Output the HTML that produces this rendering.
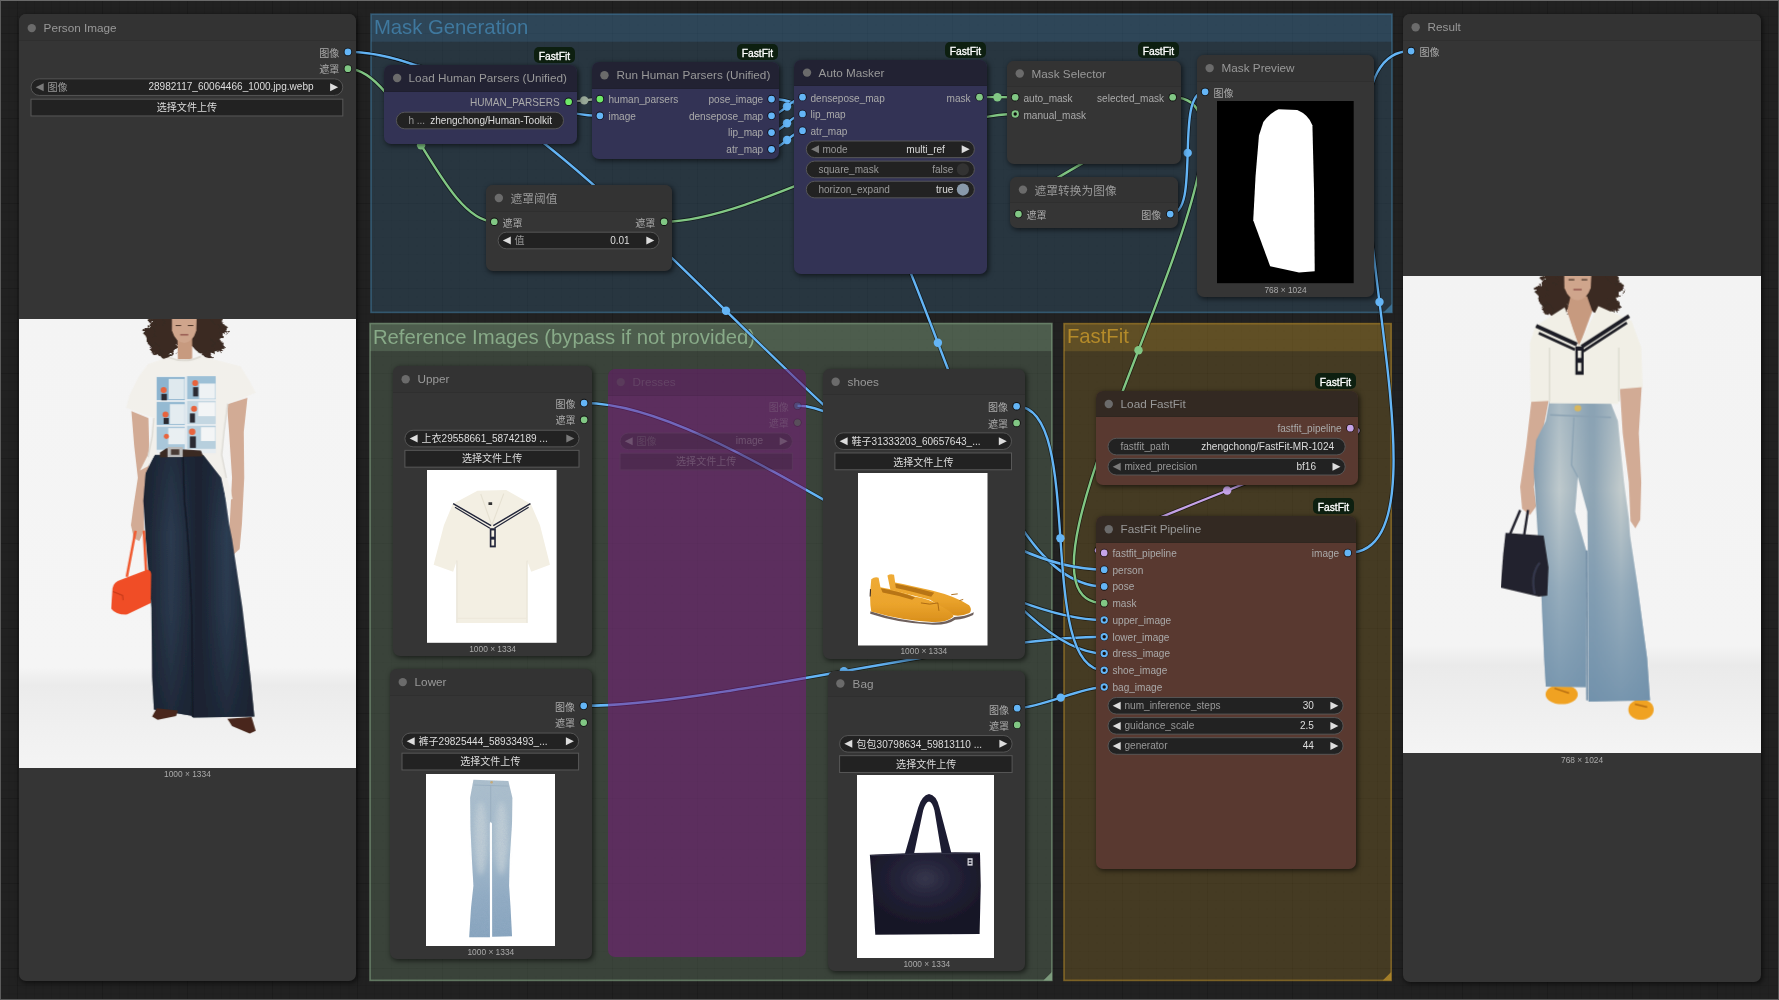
<!DOCTYPE html><html lang="zh"><head><meta charset="utf-8"><title>FastFit workflow</title><style>
*{box-sizing:border-box;margin:0;padding:0}
html,body{width:1779px;height:1000px;overflow:hidden;background:#1f1f1f}
body{font-family:"Liberation Sans","Noto Sans CJK SC",sans-serif;position:relative;
 background-color:#212121;
 background-image:
  linear-gradient(to right,rgba(0,0,0,.10) 1px,transparent 1px),
  linear-gradient(to bottom,rgba(0,0,0,.10) 1px,transparent 1px),
  linear-gradient(to right,rgba(0,0,0,.065) 1px,transparent 1px),
  linear-gradient(to bottom,rgba(0,0,0,.065) 1px,transparent 1px);
 background-size:85px 85px,85px 85px,8.5px 8.5px,8.5px 8.5px;
 background-position:17px 0,0 33px,0 0,0 7.5px;
}
.frame{position:absolute;left:0;top:0;width:1779px;height:1000px;border-top:1px solid #6a6a6a;border-left:1px solid #5c5c5c;border-bottom:1.5px solid #5a5a5a;border-right:1px solid #565656;pointer-events:none;z-index:50}
.grp{position:absolute;border:1px solid;}
.grp .gt{position:absolute;left:0;top:0;right:0;height:28.4px}
.grp .gl{position:absolute;left:2.8px;top:2.6px;font-size:20.1px;line-height:24px;white-space:nowrap}
.grp .tri{position:absolute;right:0;bottom:0;width:0;height:0;border-style:solid;border-width:0 0 9px 9px;border-color:transparent}
.node{position:absolute;border-radius:7px;box-shadow:1.5px 1.5px 5px rgba(0,0,0,.55);}
.node .tb{position:absolute;left:0;top:0;right:0;height:26.5px;border-radius:7px 7px 0 0;border-bottom:1.5px solid rgba(0,0,0,.065)}
.node .td{position:absolute;left:8.4px;top:8.6px;width:8.4px;height:8.4px;border-radius:50%;background:#6b6b6b}
.tt{position:absolute;left:24.6px;top:0;height:25px;line-height:25.6px;font-size:11.73px;color:#999;white-space:nowrap}
.sl{position:absolute;font-size:10.05px;line-height:12px;color:#aaa;white-space:nowrap}
.dot{position:absolute;width:8.8px;height:8.8px;border-radius:50%;border:1px solid rgba(0,0,0,.75);background-clip:border-box}
.ring{position:absolute;width:7.8px;height:7.8px;border-radius:50%;border:2.2px solid;background:transparent;box-shadow:0 0 0 1px rgba(0,0,0,.7)}
.w{position:absolute;height:17.3px;border-radius:8.7px;background:#222;border:1px solid #5c5c5c;font-size:10.05px;line-height:17.2px;color:#ddd;white-space:nowrap;overflow:hidden}
.w .l{position:absolute;left:12.5px;top:0;color:#999}
.w .v{position:absolute;right:12.5px;top:0;color:#ddd}
.w .al,.w .ar{position:absolute;top:3.2px;width:0;height:0;border-style:solid;border-color:transparent}
.w .al{left:4.3px;border-width:4.3px 8.5px 4.3px 0;border-right-color:#ddd}
.w .ar{right:4.3px;border-width:4.3px 0 4.3px 8.5px;border-left-color:#ddd}
.w .al.dim{border-right-color:#7a7a7a}
.w .ar.dim{border-left-color:#7a7a7a}
.w .tg{position:absolute;right:5.6px;top:1.4px;width:12.2px;height:12.2px;border-radius:50%}
.btn{position:absolute;height:17.5px;background:#222;border:1px solid #595959;font-size:10.05px;line-height:15.5px;color:#ddd;text-align:center;white-space:nowrap}
.il{position:absolute;font-size:8.4px;line-height:10px;color:#aaa;text-align:center;white-space:nowrap}
.bdg{will-change:transform;position:absolute;height:16.4px;border-radius:5px;background:#0d1f10;color:#fff;font-size:10.3px;line-height:20.2px;-webkit-text-stroke:.3px #fff;text-align:center;white-space:nowrap}
.pic{position:absolute;overflow:hidden}
.pic svg{display:block;width:100%;height:100%}
svg.links{will-change:transform;position:absolute;left:0;top:0;width:1779px;height:1000px;overflow:visible}
.byp{opacity:.22}
.nt{position:absolute;z-index:12;will-change:transform}
.wt{position:absolute;height:17.4px;line-height:18.3px;font-size:10.05px;white-space:nowrap}
</style></head><body>
<svg class="links" style="z-index:1" viewBox="0 0 1779 1000"><rect x="371.0" y="14.15" width="1021.0" height="298.25" fill="rgba(63,120,158,0.25)"/><rect x="371.0" y="14.15" width="1021.0" height="27.6" fill="rgba(63,120,158,0.25)"/><rect x="371.0" y="14.15" width="1021.0" height="298.25" fill="none" stroke="rgba(63,120,158,.58)" stroke-width="1.6"/><path d="M1392.0 303.9L1392.0 312.4L1383.5 312.4Z" fill="rgba(63,120,158,.85)"/><text x="373.9" y="33.95" font-size="20.3" fill="#3f789e">Mask Generation</text><rect x="370.0" y="323.5" width="681.9" height="656.9" fill="rgba(136,170,136,0.25)"/><rect x="370.0" y="323.5" width="681.9" height="27.6" fill="rgba(136,170,136,0.25)"/><rect x="370.0" y="323.5" width="681.9" height="656.9" fill="none" stroke="rgba(136,170,136,.58)" stroke-width="1.6"/><path d="M1051.9 971.9L1051.9 980.4L1043.4 980.4Z" fill="rgba(136,170,136,.85)"/><text x="372.9" y="344.0" font-size="20.3" fill="#88AA88">Reference Images (bypass if not provided)</text><rect x="1064.0" y="323.6" width="327.2" height="656.8" fill="rgba(181,139,42,0.25)"/><rect x="1064.0" y="323.6" width="327.2" height="27.6" fill="rgba(181,139,42,0.25)"/><rect x="1064.0" y="323.6" width="327.2" height="656.8" fill="none" stroke="rgba(181,139,42,.58)" stroke-width="1.6"/><path d="M1391.2 971.9L1391.2 980.4L1382.7 980.4Z" fill="rgba(181,139,42,.85)"/><text x="1066.9" y="343.40000000000003" font-size="20.3" fill="#b58b2a">FastFit</text></svg>
<svg class="links" style="z-index:5" viewBox="0 0 1779 1000"><path d="M347.9 51.9C412.9 51.9 534.9 115.8 599.9 115.8" stroke="rgba(0,0,0,.55)" stroke-width="3.9" fill="none"/><path d="M347.9 51.9C412.9 51.9 534.9 115.8 599.9 115.8" stroke="#64B5F6" stroke-width="2.4" fill="none"/><circle cx="473.9" cy="83.9" r="4.2" fill="#64B5F6"/><path d="M347.9 68.7C400.8 68.7 441.4 221.7 494.3 221.7" stroke="rgba(0,0,0,.55)" stroke-width="3.9" fill="none"/><path d="M347.9 68.7C400.8 68.7 441.4 221.7 494.3 221.7" stroke="#81C784" stroke-width="2.4" fill="none"/><circle cx="421.1" cy="145.2" r="4.2" fill="#81C784"/><path d="M568.6 101.7C576.5 101.7 592.0 99.0 599.9 99.0" stroke="rgba(0,0,0,.55)" stroke-width="3.9" fill="none"/><path d="M568.6 101.7C576.5 101.7 592.0 99.0 599.9 99.0" stroke="#99AA99" stroke-width="2.4" fill="none"/><circle cx="584.2" cy="100.4" r="4.2" fill="#99AA99"/><path d="M771.5 99.0C919.0 99.0 956.7 586.5 1104.2 586.5" stroke="rgba(0,0,0,.55)" stroke-width="3.9" fill="none"/><path d="M771.5 99.0C919.0 99.0 956.7 586.5 1104.2 586.5" stroke="#64B5F6" stroke-width="2.4" fill="none"/><circle cx="937.9" cy="342.7" r="4.2" fill="#64B5F6"/><path d="M771.5 115.8C780.5 115.8 793.5 97.1 802.5 97.1" stroke="rgba(0,0,0,.55)" stroke-width="3.9" fill="none"/><path d="M771.5 115.8C780.5 115.8 793.5 97.1 802.5 97.1" stroke="#64B5F6" stroke-width="2.4" fill="none"/><circle cx="787.0" cy="106.5" r="4.2" fill="#64B5F6"/><path d="M771.5 132.6C780.5 132.6 793.5 113.9 802.5 113.9" stroke="rgba(0,0,0,.55)" stroke-width="3.9" fill="none"/><path d="M771.5 132.6C780.5 132.6 793.5 113.9 802.5 113.9" stroke="#64B5F6" stroke-width="2.4" fill="none"/><circle cx="787.0" cy="123.2" r="4.2" fill="#64B5F6"/><path d="M771.5 149.3C780.5 149.3 793.5 130.7 802.5 130.7" stroke="rgba(0,0,0,.55)" stroke-width="3.9" fill="none"/><path d="M771.5 149.3C780.5 149.3 793.5 130.7 802.5 130.7" stroke="#64B5F6" stroke-width="2.4" fill="none"/><circle cx="787.0" cy="140.0" r="4.2" fill="#64B5F6"/><path d="M979.5 97.1C988.4 97.1 1006.3 97.2 1015.2 97.2" stroke="rgba(0,0,0,.55)" stroke-width="3.9" fill="none"/><path d="M979.5 97.1C988.4 97.1 1006.3 97.2 1015.2 97.2" stroke="#81C784" stroke-width="2.4" fill="none"/><circle cx="997.4" cy="97.2" r="4.2" fill="#81C784"/><path d="M664.1 221.7C755.9 221.7 923.4 114.0 1015.2 114.0" stroke="rgba(0,0,0,.55)" stroke-width="3.9" fill="none"/><path d="M664.1 221.7C755.9 221.7 923.4 114.0 1015.2 114.0" stroke="#81C784" stroke-width="2.4" fill="none"/><circle cx="839.6" cy="167.9" r="4.2" fill="#81C784"/><path d="M1172.7 97.2C1221.1 97.2 970.0 214.0 1018.4 214.0" stroke="rgba(0,0,0,.55)" stroke-width="3.9" fill="none"/><path d="M1172.7 97.2C1221.1 97.2 970.0 214.0 1018.4 214.0" stroke="#81C784" stroke-width="2.4" fill="none"/><circle cx="1095.5" cy="155.6" r="4.2" fill="#81C784"/><path d="M1172.7 97.2C1300.3 97.2 976.6 603.2 1104.2 603.2" stroke="rgba(0,0,0,.55)" stroke-width="3.9" fill="none"/><path d="M1172.7 97.2C1300.3 97.2 976.6 603.2 1104.2 603.2" stroke="#81C784" stroke-width="2.4" fill="none"/><circle cx="1138.5" cy="350.2" r="4.2" fill="#81C784"/><path d="M1170.2 214.0C1202.0 214.0 1173.3 91.8 1205.1 91.8" stroke="rgba(0,0,0,.55)" stroke-width="3.9" fill="none"/><path d="M1170.2 214.0C1202.0 214.0 1173.3 91.8 1205.1 91.8" stroke="#64B5F6" stroke-width="2.4" fill="none"/><circle cx="1187.7" cy="152.9" r="4.2" fill="#64B5F6"/><path d="M347.9 51.9C577.0 51.9 875.1 569.7 1104.2 569.7" stroke="rgba(0,0,0,.55)" stroke-width="3.9" fill="none"/><path d="M347.9 51.9C577.0 51.9 875.1 569.7 1104.2 569.7" stroke="#64B5F6" stroke-width="2.4" fill="none"/><circle cx="726.0" cy="310.8" r="4.2" fill="#64B5F6"/><path d="M584.1 403.0C725.0 403.0 963.3 620.0 1104.2 620.0" stroke="rgba(0,0,0,.55)" stroke-width="3.9" fill="none"/><path d="M584.1 403.0C725.0 403.0 963.3 620.0 1104.2 620.0" stroke="#64B5F6" stroke-width="2.4" fill="none"/><circle cx="844.1" cy="511.5" r="4.2" fill="#64B5F6"/><path d="M583.7 705.8C715.0 705.8 972.9 636.7 1104.2 636.7" stroke="rgba(0,0,0,.55)" stroke-width="3.9" fill="none"/><path d="M583.7 705.8C715.0 705.8 972.9 636.7 1104.2 636.7" stroke="#64B5F6" stroke-width="2.4" fill="none"/><circle cx="843.9" cy="671.3" r="4.2" fill="#64B5F6"/><path d="M797.5 405.8C896.1 405.8 1005.6 653.5 1104.2 653.5" stroke="rgba(0,0,0,.55)" stroke-width="3.9" fill="none"/><path d="M797.5 405.8C896.1 405.8 1005.6 653.5 1104.2 653.5" stroke="#64B5F6" stroke-width="2.4" fill="none"/><circle cx="950.9" cy="529.7" r="4.2" fill="#64B5F6"/><path d="M1016.6 406.2C1086.1 406.2 1034.7 670.3 1104.2 670.3" stroke="rgba(0,0,0,.55)" stroke-width="3.9" fill="none"/><path d="M1016.6 406.2C1086.1 406.2 1034.7 670.3 1104.2 670.3" stroke="#64B5F6" stroke-width="2.4" fill="none"/><circle cx="1060.4" cy="538.2" r="4.2" fill="#64B5F6"/><path d="M1017.2 708.1C1039.6 708.1 1081.8 687.0 1104.2 687.0" stroke="rgba(0,0,0,.55)" stroke-width="3.9" fill="none"/><path d="M1017.2 708.1C1039.6 708.1 1081.8 687.0 1104.2 687.0" stroke="#64B5F6" stroke-width="2.4" fill="none"/><circle cx="1060.7" cy="697.6" r="4.2" fill="#64B5F6"/><path d="M1350.3 428.1C1419.3 428.1 1035.2 552.9 1104.2 552.9" stroke="rgba(0,0,0,.55)" stroke-width="3.9" fill="none"/><path d="M1350.3 428.1C1419.3 428.1 1035.2 552.9 1104.2 552.9" stroke="#C5A3E8" stroke-width="2.4" fill="none"/><circle cx="1227.2" cy="490.5" r="4.2" fill="#C5A3E8"/><path d="M1347.8 552.9C1474.3 552.9 1284.6 51.0 1411.1 51.0" stroke="rgba(0,0,0,.55)" stroke-width="3.9" fill="none"/><path d="M1347.8 552.9C1474.3 552.9 1284.6 51.0 1411.1 51.0" stroke="#64B5F6" stroke-width="2.4" fill="none"/><circle cx="1379.5" cy="302.0" r="4.2" fill="#64B5F6"/></svg>
<div class="node" style="left:19.0px;top:14.4px;width:336.9px;height:966.6px;z-index:10;background:#353535"><div class="tb" style="background:#333"></div></div>
<div class="nt" style="left:19.0px;top:14.4px;width:336.9px;height:966.6px;"><div class="tt" style="top:0.8px">Person Image</div><div class="sl" style="right:16.6px;top:33.54px">图像</div><div class="sl" style="right:16.6px;top:50.300000000000004px">遮罩</div><div class="wt" style="left:28.5px;top:64.8528px;color:#999;">图像</div><div class="wt" style="right:42.300000000000026px;top:63.9528px;color:#ddd;">28982117_60064466_1000.jpg.webp</div><div class="wt" style="left:11.5px;width:312.79999999999995px;text-align:center;top:85.1648px;color:#ddd">选择文件上传</div><div class="pic" style="left:0px;top:304.9px;width:337.1px;height:449.0px"><svg viewBox="0 9.5 1464 1952.5" preserveAspectRatio="none">
<defs><filter id="curl" x="-10%" y="-10%" width="120%" height="120%"><feTurbulence type="turbulence" baseFrequency=".045" numOctaves="2" seed="7"/><feDisplacementMap in="SourceGraphic" scale="26"/></filter><filter id="pb" x="-5%" y="-5%" width="110%" height="110%"><feGaussianBlur stdDeviation="3"/></filter><linearGradient id="pbg" x1="0" y1="0" x2="0" y2="1">
<stop offset="0" stop-color="#f4f4f4"/><stop offset=".775" stop-color="#f5f5f5"/><stop offset=".815" stop-color="#ebebeb"/><stop offset=".91" stop-color="#f0f0f0"/><stop offset="1" stop-color="#f4f4f4"/></linearGradient>
<linearGradient id="pj" x1="0" y1="0" x2="1" y2="0"><stop offset="0" stop-color="#1b2330"/><stop offset=".25" stop-color="#2c3b50"/><stop offset=".5" stop-color="#1a2230"/><stop offset=".75" stop-color="#2d3d53"/><stop offset="1" stop-color="#1b2330"/></linearGradient>
<linearGradient id="pjv" x1="0" y1="0" x2="0" y2="1"><stop offset="0" stop-color="#1b2433" stop-opacity=".55"/><stop offset=".3" stop-color="#1b2433" stop-opacity="0"/><stop offset=".6" stop-color="#1b2433" stop-opacity=".1"/><stop offset="1" stop-color="#1a2230" stop-opacity=".7"/></linearGradient>
</defs>
<rect x="0" y="9.5" width="1464" height="1952.5" fill="url(#pbg)"/>
<g filter="url(#pb)">
<!-- arms -->
<path d="M488 410 L500 560 L516 700 L496 830 L486 905 L498 962 L522 975 L542 930 L542 830 L562 700 L566 600 L562 440Z" fill="#d2ab95"/>
<path d="M903 380 L912 500 L925 700 L915 900 L905 1010 L930 1035 L958 1010 L968 900 L978 700 L976 500 L992 352Z" fill="#d2ab95"/>
<g filter="url(#curl)"><path d="M715 -60 Q590 -50 552 40 Q528 100 578 135 Q600 180 648 168 Q668 150 690 120 L745 120 Q780 165 822 160 Q862 150 864 110 Q902 60 872 5 Q830 -55 715 -60Z" fill="#3a2a21"/>
<circle cx="560" cy="60" r="24" fill="#3a2a21"/><circle cx="585" cy="135" r="22" fill="#3a2a21"/><circle cx="630" cy="160" r="20" fill="#3a2a21"/>
<circle cx="880" cy="50" r="22" fill="#3a2a21"/><circle cx="860" cy="120" r="24" fill="#3a2a21"/><circle cx="815" cy="158" r="20" fill="#3a2a21"/><circle cx="600" cy="10" r="24" fill="#3a2a21"/><circle cx="850" cy="5" r="22" fill="#3a2a21"/></g>
<!-- neck + face -->
<path d="M688 95 L690 185 L752 185 L752 95Z" fill="#c79a7f"/>
<path d="M664 -10 L664 60 Q680 112 718 114 Q756 110 770 60 L772 -10Z" fill="#cfa58c"/>
<path d="M700 78 L735 78" stroke="#9c5f55" stroke-width="7"/>
<path d="M680 38 L704 38 M733 38 L757 38" stroke="#4a3428" stroke-width="5"/>
<!-- jeans -->
<path d="M590 598 L800 598 L872 650 L892 760 L912 900 L925 965 L970 1265 L1005 1565 L1022 1738 L756 1742 L750 1735 L586 1708 L578 1565 L575 1265 L550 965 L540 800 L550 680Z" fill="url(#pj)"/>
<path d="M590 598 L800 598 L872 650 L892 760 L912 900 L925 965 L970 1265 L1005 1565 L1022 1738 L756 1742 L750 1735 L586 1708 L578 1565 L575 1265 L550 965 L540 800 L550 680Z" fill="url(#pjv)"/>
<path d="M712 610 L718 800 Q740 1000 750 1300 L754 1740" stroke="#141b28" stroke-width="7" fill="none"/>
<!-- t-shirt -->
<path d="M652 175 Q720 200 790 170 L962 215 L1002 280 L1028 330 L906 378 L890 500 L880 600 L896 680 L916 740 L927 792 L900 800 L878 700 L800 600 L590 600 L560 650 L525 668 L560 600 L578 520 L585 440 L465 396 L480 340 L520 260 L560 205Z" fill="#f2f0eb"/>
<path d="M585 440 L578 520 L560 610" stroke="#dcdad4" stroke-width="6" fill="none"/>
<path d="M906 378 L890 500 L880 600 L900 700" stroke="#dcdad4" stroke-width="6" fill="none"/>
<path d="M652 177 Q720 205 790 172" stroke="#dedbd4" stroke-width="8" fill="none"/>
<!-- print -->
<rect x="597" y="258" width="258" height="335" fill="#e7edf1"/>
<rect x="598" y="262" width="122" height="100" fill="#8db4cf"/><rect x="730" y="258" width="124" height="100" fill="#9dc0d6"/>
<rect x="598" y="370" width="122" height="100" fill="#95bad2"/><rect x="730" y="366" width="124" height="100" fill="#c4d7e2"/>
<rect x="598" y="478" width="122" height="100" fill="#a9c7da"/><rect x="730" y="474" width="124" height="100" fill="#b7cfdd"/>
<rect x="650" y="270" width="68" height="88" fill="#dfe9ee"/><rect x="782" y="290" width="70" height="66" fill="#eef2f4"/>
<rect x="655" y="380" width="64" height="86" fill="#e4ecf0"/><rect x="778" y="372" width="74" height="60" fill="#f3f5f6"/>
<rect x="648" y="484" width="72" height="70" fill="#e9eff2"/><rect x="790" y="480" width="62" height="60" fill="#f3f5f6"/>
<circle cx="628" cy="318" r="13" fill="#e8633c"/><circle cx="765" cy="288" r="13" fill="#e8633c"/>
<circle cx="636" cy="425" r="13" fill="#e8633c"/><circle cx="760" cy="400" r="13" fill="#e8633c"/>
<circle cx="640" cy="520" r="11" fill="#e8633c"/><circle cx="752" cy="500" r="14" fill="#e8633c"/>
<rect x="618" y="335" width="24" height="28" fill="#2b2b33"/><rect x="756" y="306" width="22" height="40" fill="#2b2b33"/><rect x="628" y="440" width="22" height="26" fill="#2b2b33"/><rect x="742" y="420" width="22" height="40" fill="#2b2b33"/><rect x="742" y="520" width="26" height="50" fill="#2b2b33"/>
<!-- belt -->
<path d="M612 590 L640 572 L790 582 L800 606 L612 612Z" fill="#3a2a24"/>
<rect x="645" y="566" width="66" height="44" fill="#b9b9b9"/><rect x="660" y="576" width="36" height="24" fill="#4a3a34"/>
<!-- bag -->
<path d="M506 930 L468 1130 M542 930 L552 1110" stroke="#f05a30" stroke-width="11" fill="none"/>
<path d="M400 1268 L406 1180 Q412 1150 442 1143 L556 1100 Q572 1100 574 1118 L572 1245 L470 1294 Q420 1296 400 1268Z" fill="#f04e26"/>
<path d="M408 1195 L450 1212 L452 1232" stroke="#c73b1c" stroke-width="5" fill="none"/>
<!-- shoes -->
<path d="M578 1738 L598 1702 L690 1712 L682 1736 L602 1752Z" fill="#48281c"/>
<path d="M905 1748 L1010 1740 L1028 1800 L1002 1812 L925 1780Z" fill="#48281c"/>
</g></svg></div><div class="il" style="left:0;width:336.9px;top:755px">1000 × 1334</div></div>
<div class="node" style="left:384.4px;top:65.1px;width:192.2px;height:78.6px;z-index:10;background:#335"><div class="tb" style="background:#223"></div></div>
<div class="nt" style="left:384.4px;top:65.1px;width:192.2px;height:78.6px;"><div class="tt" style="top:0px">Load Human Parsers (Unified)</div><div class="sl" style="right:16.6px;top:31.740000000000002px">HUMAN_PARSERS</div><div class="wt" style="left:24.4px;top:46.5928px;color:#999;">h ...</div><div class="wt" style="right:24.199999999999996px;top:46.5928px;color:#ddd;">zhengchong/Human-Toolkit</div></div>
<div class="bdg" style="left:533.6999999999999px;top:46.89999999999999px;width:40.8px;z-index:10">FastFit</div>
<div class="node" style="left:591.7px;top:62.4px;width:187.8px;height:96.3px;z-index:10;background:#335"><div class="tb" style="background:#223"></div></div>
<div class="nt" style="left:591.7px;top:62.4px;width:187.8px;height:96.3px;"><div class="tt" style="top:0px">Run Human Parsers (Unified)</div><div class="sl" style="left:16.5px;top:31.740000000000002px">human_parsers</div><div class="sl" style="left:16.5px;top:48.50000000000001px">image</div><div class="sl" style="right:16.6px;top:31.740000000000002px">pose_image</div><div class="sl" style="right:16.6px;top:48.50000000000001px">densepose_map</div><div class="sl" style="right:16.6px;top:65.25999999999999px">lip_map</div><div class="sl" style="right:16.6px;top:82.02px">atr_map</div></div>
<div class="bdg" style="left:736.6px;top:44.2px;width:40.8px;z-index:10">FastFit</div>
<div class="node" style="left:794.3px;top:59.7px;width:193.2px;height:214.5px;z-index:10;background:#335"><div class="tb" style="background:#223"></div></div>
<div class="nt" style="left:794.3px;top:59.7px;width:193.2px;height:214.5px;"><div class="tt" style="top:0px">Auto Masker</div><div class="sl" style="left:16.5px;top:32.54px">densepose_map</div><div class="sl" style="left:16.5px;top:49.300000000000004px">lip_map</div><div class="sl" style="left:16.5px;top:66.05999999999999px">atr_map</div><div class="sl" style="right:16.6px;top:32.54px">mask</div><div class="wt" style="left:28.5px;top:80.8128px;color:#999;">mode</div><div class="wt" style="right:42.3px;top:80.8128px;color:#ddd;">multi_ref</div><div class="wt" style="left:24.4px;top:100.92479999999999px;color:#999;">square_mask</div><div class="wt" style="right:33.8px;top:100.92479999999999px;color:#ddd;color:#999">false</div><div class="wt" style="left:24.4px;top:121.03679999999999px;color:#999;">horizon_expand</div><div class="wt" style="right:33.8px;top:121.03679999999999px;color:#ddd;">true</div></div>
<div class="bdg" style="left:944.6px;top:41.5px;width:40.8px;z-index:10">FastFit</div>
<div class="node" style="left:1007.0px;top:60.6px;width:173.7px;height:103px;z-index:10;background:#353535"><div class="tb" style="background:#333"></div></div>
<div class="nt" style="left:1007.0px;top:60.6px;width:173.7px;height:103px;"><div class="tt" style="top:0px">Mask Selector</div><div class="sl" style="left:16.5px;top:31.740000000000002px">auto_mask</div><div class="sl" style="left:16.5px;top:48.50000000000001px">manual_mask</div><div class="sl" style="right:16.6px;top:31.740000000000002px">selected_mask</div></div>
<div class="bdg" style="left:1137.8000000000002px;top:42.400000000000006px;width:40.8px;z-index:10">FastFit</div>
<div class="node" style="left:1010.2px;top:176.7px;width:168px;height:51.7px;z-index:10;background:#353535"><div class="tb" style="background:#333"></div></div>
<div class="nt" style="left:1010.2px;top:176.7px;width:168px;height:51.7px;"><div class="tt" style="top:0.9px">遮罩转换为图像</div><div class="sl" style="left:16.5px;top:33.34px">遮罩</div><div class="sl" style="right:16.6px;top:33.34px">图像</div></div>
<div class="node" style="left:486.1px;top:185.1px;width:186px;height:85.5px;z-index:10;background:#353535"><div class="tb" style="background:#333"></div></div>
<div class="nt" style="left:486.1px;top:185.1px;width:186px;height:85.5px;"><div class="tt" style="top:0.9px">遮罩阈值</div><div class="sl" style="left:16.5px;top:32.64px">遮罩</div><div class="sl" style="right:16.6px;top:32.64px">遮罩</div><div class="wt" style="left:28.5px;top:47.492799999999995px;color:#999;">值</div><div class="wt" style="right:42.3px;top:46.5928px;color:#ddd;">0.01</div></div>
<div class="node" style="left:1196.9px;top:55.2px;width:177px;height:241.6px;z-index:10;background:#353535"><div class="tb" style="background:#333"></div></div>
<div class="nt" style="left:1196.9px;top:55.2px;width:177px;height:241.6px;"><div class="tt" style="top:0px">Mask Preview</div><div class="sl" style="left:16.5px;top:32.64px">图像</div><div class="pic" style="left:20.2px;top:46.4px;width:136.7px;height:182.2px"><svg viewBox="0 0 1000 1334" preserveAspectRatio="none"><rect width="1000" height="1334" fill="#000"/>
<path d="M450 60 L587 66 Q670 100 698 178 L710 667 L715 1247 L600 1255 L389 1210 L265 874 L282 551 L307 253 L339 153 Q390 85 450 60Z" fill="#fff"/></svg></div><div class="il" style="left:0;width:177px;top:229.8px">768 × 1024</div></div>
<div class="node" style="left:1402.9px;top:14.4px;width:358.1px;height:967.6px;z-index:10;background:#353535"><div class="tb" style="background:#333"></div></div>
<div class="nt" style="left:1402.9px;top:14.4px;width:358.1px;height:967.6px;"><div class="tt" style="top:0px">Result</div><div class="sl" style="left:16.5px;top:32.64px">图像</div><div class="pic" style="left:0px;top:262.2px;width:358.1px;height:477.2px"><svg viewBox="0 6.5 1467 1954.5" preserveAspectRatio="none">
<defs><filter id="curl2" x="-10%" y="-10%" width="120%" height="120%"><feTurbulence type="turbulence" baseFrequency=".045" numOctaves="2" seed="7"/><feDisplacementMap in="SourceGraphic" scale="26"/></filter><filter id="rb" x="-5%" y="-5%" width="110%" height="110%"><feGaussianBlur stdDeviation="3"/></filter>
<linearGradient id="rbg" x1="0" y1="0" x2="0" y2="1">
<stop offset="0" stop-color="#f3f3f3"/><stop offset=".775" stop-color="#f4f4f4"/><stop offset=".815" stop-color="#eaeaea"/><stop offset=".91" stop-color="#efefef"/><stop offset="1" stop-color="#f4f4f4"/></linearGradient>
<linearGradient id="rj" x1="0" y1="0" x2="1" y2="0"><stop offset="0" stop-color="#869eb0"/><stop offset=".22" stop-color="#bfcacd"/><stop offset=".48" stop-color="#90a6b5"/><stop offset=".52" stop-color="#90a6b5"/><stop offset=".75" stop-color="#c3cccd"/><stop offset="1" stop-color="#8aa1b2"/></linearGradient>
<linearGradient id="rjv" x1="0" y1="0" x2="0" y2="1"><stop offset="0" stop-color="#7d9bb3" stop-opacity=".3"/><stop offset=".3" stop-color="#7d9bb3" stop-opacity="0"/><stop offset=".62" stop-color="#7696b0" stop-opacity=".55"/><stop offset="1" stop-color="#6f90ab" stop-opacity=".9"/></linearGradient>
</defs>
<rect x="0" y="6.5" width="1467" height="1954.5" fill="url(#rbg)"/>
<g filter="url(#rb)">
<!-- arms -->
<path d="M528 500 L505 700 L480 870 L488 960 L520 985 L546 950 L536 870 L562 700 L598 510Z" fill="#d2ab95"/>
<path d="M888 460 L900 650 L925 850 L932 1010 L952 1040 L972 1005 L976 850 L966 650 L978 455Z" fill="#d2ab95"/>
<g filter="url(#curl2)"><path d="M715 -60 Q590 -50 552 40 Q528 100 578 135 Q600 180 648 168 Q668 150 690 120 L745 120 Q780 165 822 160 Q862 150 864 110 Q902 60 872 5 Q830 -55 715 -60Z" fill="#3a2a21"/>
<circle cx="560" cy="60" r="24" fill="#3a2a21"/><circle cx="585" cy="135" r="22" fill="#3a2a21"/><circle cx="630" cy="160" r="20" fill="#3a2a21"/>
<circle cx="880" cy="50" r="22" fill="#3a2a21"/><circle cx="860" cy="120" r="24" fill="#3a2a21"/><circle cx="815" cy="158" r="20" fill="#3a2a21"/><circle cx="600" cy="10" r="24" fill="#3a2a21"/><circle cx="850" cy="5" r="22" fill="#3a2a21"/></g>
<!-- neck + face -->
<path d="M686 90 L672 150 L720 300 L775 150 L754 90Z" fill="#c79a7f"/>
<path d="M660 -10 L661 55 Q678 104 716 106 Q754 102 769 55 L772 -10Z" fill="#cfa58c"/>
<path d="M698 62 L732 62" stroke="#9c5f55" stroke-width="7"/>
<path d="M678 22 L702 22 M731 22 L755 22" stroke="#4a3428" stroke-width="5"/>
<ellipse cx="650" cy="1720" rx="66" ry="40" fill="#f0a222"/>
<ellipse cx="975" cy="1782" rx="52" ry="42" fill="#f0a222"/>
<path d="M620 1695 L680 1715 M950 1760 L1000 1772" stroke="#b86f10" stroke-width="6"/>
<!-- jeans -->
<path d="M600 515 L850 525 L880 600 L890 700 L905 850 L925 1000 L930 1071 L960 1271 L1000 1571 L1012 1745 L760 1750 L757 1130 L755 971 L716 830 L705 971 L750 1130 L749 1690 L585 1688 L578 1571 L565 1271 L548 1000 L535 800 L545 680 L585 600Z" fill="url(#rj)"/>
<path d="M600 515 L850 525 L880 600 L890 700 L905 850 L925 1000 L930 1071 L960 1271 L1000 1571 L1012 1745 L760 1750 L757 1130 L755 971 L716 830 L705 971 L750 1130 L749 1690 L585 1688 L578 1571 L565 1271 L548 1000 L535 800 L545 680 L585 600Z" fill="url(#rjv)"/>
<path d="M602 575 L852 585" stroke="#8ba2b3" stroke-width="6"/>
<path d="M700 585 L690 780 L716 830" stroke="#8ea5b5" stroke-width="6" fill="none"/>
<ellipse cx="716" cy="548" rx="14" ry="13" fill="#d8b75e"/>
<!-- polo -->
<path d="M662 135 L720 290 L800 130 L936 190 L976 300 L982 462 L886 470 L882 530 L600 528 L600 518 L522 522 L520 280 L542 212Z" fill="#f1efe6"/>
<path d="M600 300 L600 520 M884 300 L884 520" stroke="#deddd2" stroke-width="6" fill="none"/>
<path d="M545 211 L712 287 M926 170 L732 296" stroke="#1f1f26" stroke-width="16" fill="none"/>
<path d="M556 240 L704 308 M917 198 L738 315" stroke="#1f1f26" stroke-width="11" fill="none"/>
<rect x="706" y="295" width="34" height="116" fill="#1f1f26"/>
<rect x="716" y="312" width="14" height="30" fill="#f1efe6"/><rect x="716" y="362" width="14" height="34" fill="#f1efe6"/>
<!-- bag -->
<path d="M480 965 L438 1065 M512 965 L496 1068" stroke="#23232e" stroke-width="10" fill="none"/>
<path d="M420 1058 L576 1070 L596 1200 L591 1316 L556 1320 L400 1283 L410 1150Z" fill="#23232d"/>
<path d="M560 1180 Q520 1230 540 1310" stroke="#34364a" stroke-width="10" fill="none"/>
<!-- shoes -->
<path d="M752 1130 L754 1745" stroke="#6f8ba3" stroke-width="7" fill="none"/>
</g></svg></div><div class="il" style="left:0;width:358.1px;top:741px">768 × 1024</div></div>
<div class="node" style="left:392.9px;top:366.4px;width:199.2px;height:290px;z-index:10;background:#353535"><div class="tb" style="background:#333"></div></div>
<div class="nt" style="left:392.9px;top:366.4px;width:199.2px;height:290px;"><div class="tt" style="top:0px">Upper</div><div class="sl" style="right:16.6px;top:32.64px">图像</div><div class="sl" style="right:16.6px;top:49.400000000000006px">遮罩</div><div class="wt" style="left:28.5px;top:64.25280000000001px;color:#ddd;">上衣29558661_58742189 ...</div><div class="wt" style="right:42.3px;top:63.3528px;color:#ddd;"></div><div class="wt" style="left:11.5px;width:175.1px;text-align:center;top:84.3648px;color:#ddd">选择文件上传</div><div class="pic" style="left:34.2px;top:104.3px;width:129.6px;height:172.8px"><svg viewBox="38 30 704 938" preserveAspectRatio="none">
<defs><filter id="ub" x="-5%" y="-5%" width="110%" height="110%"><feGaussianBlur stdDeviation="2.2"/></filter></defs>
<rect x="38" y="30" width="704" height="938" fill="#fff"/>
<g filter="url(#ub)">
<path d="M312 143 L468 138 L602 214 L652 330 L706 545 L604 582 L582 522 L582 860 L200 860 L200 522 L180 582 L74 545 L130 330 L178 214Z" fill="#f3efe3"/>
<path d="M200 522 L200 860 M582 522 L582 860" stroke="#e4dfd0" stroke-width="5" fill="none"/>
<path d="M205 835 L578 835" stroke="#e9e4d6" stroke-width="4"/>
<path d="M330 160 L390 330 L455 158" fill="none" stroke="#e6e1d2" stroke-width="6"/>
<path d="M180 212 L386 332 M600 212 L398 332" stroke="#23263a" stroke-width="8" fill="none"/>
<path d="M190 232 L380 346 M590 232 L404 346" stroke="#23263a" stroke-width="7" fill="none"/>
<rect x="379" y="346" width="33" height="104" fill="#23263a"/>
<rect x="388" y="358" width="15" height="34" fill="#f3efe3"/>
<rect x="388" y="408" width="15" height="32" fill="#f3efe3"/>
<rect x="372" y="205" width="20" height="15" fill="#333"/>
</g></svg></div><div class="il" style="left:0;width:199.2px;top:278px">1000 × 1334</div></div>
<div class="node" style="left:822.9px;top:368.8px;width:201.7px;height:290.6px;z-index:10;background:#353535"><div class="tb" style="background:#333"></div></div>
<div class="nt" style="left:822.9px;top:368.8px;width:201.7px;height:290.6px;"><div class="tt" style="top:0px">shoes</div><div class="sl" style="right:16.6px;top:33.44px">图像</div><div class="sl" style="right:16.6px;top:50.2px">遮罩</div><div class="wt" style="left:28.5px;top:64.45280000000001px;color:#ddd;">鞋子31333203_60657643_...</div><div class="wt" style="right:42.3px;top:63.552800000000005px;color:#ddd;"></div><div class="wt" style="left:11.5px;width:177.6px;text-align:center;top:84.5648px;color:#ddd">选择文件上传</div><div class="pic" style="left:35px;top:104px;width:129.5px;height:172.5px"><svg viewBox="38 30 704 936" preserveAspectRatio="none">
<defs><filter id="sb" x="-5%" y="-5%" width="110%" height="110%"><feGaussianBlur stdDeviation="2.2"/></filter>
<linearGradient id="sg" x1="0" y1="0" x2="0" y2="1"><stop offset="0" stop-color="#efab36"/><stop offset=".6" stop-color="#eba42c"/><stop offset="1" stop-color="#d98f1c"/></linearGradient></defs>
<rect x="38" y="30" width="704" height="936" fill="#fff"/>
<g filter="url(#sb)">
<path d="M106 780 Q280 838 440 842 Q530 842 562 812 Q620 810 668 786 L664 800 Q620 822 566 826 Q520 858 430 852 Q260 846 104 794Z" fill="#4a3a32" opacity=".8"/>
<path d="M198 586 Q215 574 234 582 L240 624 Q320 640 440 668 Q570 700 642 748 Q662 772 644 790 Q600 810 556 802 L430 718 L214 664Z" fill="url(#sg)"/>
<path d="M240 630 Q340 650 452 680 L436 702 Q330 672 244 654Z" fill="#b87412"/>
<path d="M110 606 Q128 592 150 598 L160 650 Q260 668 344 700 Q430 712 500 758 Q562 792 556 810 Q520 842 440 838 Q280 832 110 782 Q98 720 110 606Z" fill="url(#sg)"/>
<path d="M162 655 Q262 672 348 705 L332 718 Q250 692 172 678Z" fill="#b87412"/>
<path d="M380 735 Q430 748 472 735 L478 778 M545 690 L580 686 M590 722 L610 716" stroke="#a8650f" stroke-width="5" fill="none"/>
<path d="M106 660 L104 700" stroke="#3a2a20" stroke-width="6"/>
</g></svg></div><div class="il" style="left:0;width:201.7px;top:277px">1000 × 1334</div></div>
<div class="node" style="left:390.0px;top:669.2px;width:201.7px;height:289.5px;z-index:10;background:#353535"><div class="tb" style="background:#333"></div></div>
<div class="nt" style="left:390.0px;top:669.2px;width:201.7px;height:289.5px;"><div class="tt" style="top:0px">Lower</div><div class="sl" style="right:16.6px;top:32.64px">图像</div><div class="sl" style="right:16.6px;top:49.400000000000006px">遮罩</div><div class="wt" style="left:28.5px;top:64.25280000000001px;color:#ddd;">裤子29825444_58933493_...</div><div class="wt" style="right:42.3px;top:63.3528px;color:#ddd;"></div><div class="wt" style="left:11.5px;width:177.6px;text-align:center;top:84.3648px;color:#ddd">选择文件上传</div><div class="pic" style="left:35.6px;top:104.6px;width:129.6px;height:172px"><svg viewBox="40 30 705 938" preserveAspectRatio="none">
<defs><filter id="lb" x="-5%" y="-5%" width="110%" height="110%"><feGaussianBlur stdDeviation="2"/></filter><filter id="lb2" x="-50%" y="-20%" width="200%" height="140%"><feGaussianBlur stdDeviation="14"/></filter>
<linearGradient id="lg" x1="0" y1="0" x2="0" y2="1"><stop offset="0" stop-color="#acbfcc"/><stop offset=".45" stop-color="#a3b9ca"/><stop offset=".75" stop-color="#8faac2"/><stop offset="1" stop-color="#86a3bd"/></linearGradient>
<filter id="ln" x="0" y="0" width="100%" height="100%"><feTurbulence type="fractalNoise" baseFrequency=".35" numOctaves="2" seed="3"/><feColorMatrix values="0 0 0 0 .35  0 0 0 0 .45  0 0 0 0 .6  0 0 0 .9 -.25"/><feComposite in2="SourceGraphic" operator="in"/></filter></defs>
<rect x="40" y="30" width="705" height="938" fill="#fff"/>
<g filter="url(#lb)">
<path id="lj" d="M298 62 L488 68 L510 160 L508 300 L495 500 L492 640 L500 760 L508 915 L400 918 L399 300 L392 290 L387 300 L388 920 L275 920 L285 760 L298 640 L290 500 L282 330 L280 160Z" fill="url(#lg)"/>
<path d="M300 90 L490 96" stroke="#94abbc" stroke-width="4"/>
<path d="M392 95 L392 290" stroke="#93aabb" stroke-width="4"/>
<ellipse cx="338" cy="380" rx="34" ry="200" fill="#c6d2d8" opacity=".75" filter="url(#lb2)"/>
<ellipse cx="450" cy="380" rx="34" ry="200" fill="#c6d2d8" opacity=".75" filter="url(#lb2)"/>
<circle cx="397" cy="75" r="7" fill="#caa86a"/>
</g>
<path d="M298 62 L488 68 L510 160 L508 300 L495 500 L492 640 L500 760 L508 915 L400 918 L399 300 L392 290 L387 300 L388 920 L275 920 L285 760 L298 640 L290 500 L282 330 L280 160Z" fill="#fff" filter="url(#ln)" opacity=".55"/>
</svg></div><div class="il" style="left:0;width:201.7px;top:278px">1000 × 1334</div></div>
<div class="node" style="left:827.6px;top:670.6px;width:197.6px;height:300px;z-index:10;background:#353535"><div class="tb" style="background:#333"></div></div>
<div class="nt" style="left:827.6px;top:670.6px;width:197.6px;height:300px;"><div class="tt" style="top:0px">Bag</div><div class="sl" style="right:16.6px;top:33.54px">图像</div><div class="sl" style="right:16.6px;top:50.300000000000004px">遮罩</div><div class="wt" style="left:28.5px;top:65.3528px;color:#ddd;">包包30798634_59813110 ...</div><div class="wt" style="right:42.3px;top:64.4528px;color:#ddd;"></div><div class="wt" style="left:11.5px;width:173.5px;text-align:center;top:85.4648px;color:#ddd">选择文件上传</div><div class="pic" style="left:29px;top:104px;width:137px;height:183px"><svg viewBox="38 32 704 941" preserveAspectRatio="none">
<defs><filter id="bb" x="-5%" y="-5%" width="110%" height="110%"><feGaussianBlur stdDeviation="2.5"/></filter>
<radialGradient id="bg1" cx=".5" cy=".32" r=".55"><stop offset="0" stop-color="#36364c"/><stop offset=".45" stop-color="#232238"/><stop offset="1" stop-color="#191828"/></radialGradient></defs>
<rect x="38" y="32" width="704" height="941" fill="#fff"/>
<g filter="url(#bb)">
<path d="M272 480 L352 200 Q372 136 408 130 Q446 134 462 200 L535 480 L480 480 L436 215 Q425 170 408 168 Q390 172 378 215 L322 480Z" fill="#1e1d33"/>
<path d="M104 442 Q390 425 670 430 L674 600 L668 850 L132 853 L120 650Z" fill="url(#bg1)"/>
<path d="M108 446 Q390 432 668 436" stroke="#34344a" stroke-width="5" fill="none"/>
<rect x="606" y="460" width="26" height="38" fill="#d9d9e0"/>
<rect x="612" y="468" width="14" height="8" fill="#1c1b2e"/><rect x="612" y="482" width="14" height="8" fill="#1c1b2e"/>
</g></svg></div><div class="il" style="left:0;width:197.6px;top:288px">1000 × 1334</div></div>
<div class="node" style="left:1096px;top:390.8px;width:262.3px;height:94.6px;z-index:10;background:#593930"><div class="tb" style="background:#332922"></div></div>
<div class="nt" style="left:1096px;top:390.8px;width:262.3px;height:94.6px;"><div class="tt" style="top:0.3px">Load FastFit</div><div class="sl" style="right:16.6px;top:32.440000000000005px">fastfit_pipeline</div><div class="wt" style="left:24.4px;top:46.992799999999995px;color:#999;">fastfit_path</div><div class="wt" style="right:24.199999999999996px;top:46.992799999999995px;color:#ddd;">zhengchong/FastFit-MR-1024</div><div class="wt" style="left:28.5px;top:67.1048px;color:#999;">mixed_precision</div><div class="wt" style="right:42.3px;top:67.1048px;color:#ddd;">bf16</div></div>
<div class="bdg" style="left:1315.4px;top:372.6px;width:40.8px;z-index:10">FastFit</div>
<div class="node" style="left:1096px;top:516.3px;width:259.8px;height:352.7px;z-index:10;background:#593930"><div class="tb" style="background:#332922"></div></div>
<div class="nt" style="left:1096px;top:516.3px;width:259.8px;height:352.7px;"><div class="tt" style="top:0px">FastFit Pipeline</div><div class="sl" style="left:16.5px;top:31.740000000000002px">fastfit_pipeline</div><div class="sl" style="left:16.5px;top:48.50000000000001px">person</div><div class="sl" style="left:16.5px;top:65.25999999999999px">pose</div><div class="sl" style="left:16.5px;top:82.02px">mask</div><div class="sl" style="left:16.5px;top:98.78px">upper_image</div><div class="sl" style="left:16.5px;top:115.54px">lower_image</div><div class="sl" style="left:16.5px;top:132.29999999999998px">dress_image</div><div class="sl" style="left:16.5px;top:149.06px">shoe_image</div><div class="sl" style="left:16.5px;top:165.82000000000002px">bag_image</div><div class="sl" style="right:16.6px;top:31.740000000000002px">image</div><div class="wt" style="left:28.5px;top:180.6728px;color:#999;">num_inference_steps</div><div class="wt" style="right:41.90000000000002px;top:180.6728px;color:#ddd;">30</div><div class="wt" style="left:28.5px;top:200.7848px;color:#999;">guidance_scale</div><div class="wt" style="right:41.90000000000002px;top:200.7848px;color:#ddd;">2.5</div><div class="wt" style="left:28.5px;top:220.89679999999998px;color:#999;">generator</div><div class="wt" style="right:41.90000000000002px;top:220.89679999999998px;color:#ddd;">44</div></div>
<div class="bdg" style="left:1312.9px;top:498.09999999999997px;width:40.8px;z-index:10">FastFit</div>
<div class="node" style="left:608px;top:369.2px;width:197.5px;height:588px;z-index:10;background:rgba(126,25,130,.50);box-shadow:none"><div class="tb" style="background:rgba(0,0,0,.07);border-bottom-color:rgba(0,0,0,.05)"></div></div>
<div class="nt byp" style="left:608px;top:369.2px;width:197.5px;height:588px;"><div class="tt" style="top:0px">Dresses</div><div class="sl" style="right:16.6px;top:32.64px">图像</div><div class="sl" style="right:16.6px;top:49.400000000000006px">遮罩</div><div class="wt" style="left:28.5px;top:64.25280000000001px;color:#999;">图像</div><div class="wt" style="right:42.3px;top:63.3528px;color:#ddd;">image</div><div class="wt" style="left:11.5px;width:173.4px;text-align:center;top:84.3648px;color:#ddd">选择文件上传</div></div>
<svg class="links" style="z-index:11" viewBox="0 0 1779 1000"><rect x="31.00" y="78.85" width="311.80" height="16.60" rx="8.30" fill="#222" stroke="#5a5a5a" stroke-width=".9" opacity="1"/><path d="M35.70 87.15L43.70 83.15L43.70 91.15Z" fill="#7a7a7a" opacity="1"/><path d="M338.10 87.15L330.10 83.15L330.10 91.15Z" fill="#ddd" opacity="1"/><rect x="31.00" y="99.16" width="311.80" height="16.80" fill="#222" stroke="#585858" stroke-width="1" opacity="1"/><rect x="396.40" y="112.19" width="167.10" height="16.60" rx="8.30" fill="#222" stroke="#5a5a5a" stroke-width=".9" opacity="1"/><rect x="806.30" y="141.01" width="168.10" height="16.60" rx="8.30" fill="#222" stroke="#5a5a5a" stroke-width=".9" opacity="1"/><path d="M811.00 149.31L819.00 145.31L819.00 153.31Z" fill="#7a7a7a" opacity="1"/><path d="M969.70 149.31L961.70 145.31L961.70 153.31Z" fill="#ddd" opacity="1"/><rect x="806.30" y="161.12" width="168.10" height="16.60" rx="8.30" fill="#222" stroke="#5a5a5a" stroke-width=".9" opacity="1"/><circle cx="962.90" cy="169.42" r="6.1" fill="#333" opacity="1"/><rect x="806.30" y="181.24" width="168.10" height="16.60" rx="8.30" fill="#222" stroke="#5a5a5a" stroke-width=".9" opacity="1"/><circle cx="962.90" cy="189.54" r="6.1" fill="#8899aa" opacity="1"/><rect x="498.10" y="232.19" width="160.90" height="16.60" rx="8.30" fill="#222" stroke="#5a5a5a" stroke-width=".9" opacity="1"/><path d="M502.80 240.49L510.80 236.49L510.80 244.49Z" fill="#ddd" opacity="1"/><path d="M654.30 240.49L646.30 236.49L646.30 244.49Z" fill="#ddd" opacity="1"/><rect x="404.90" y="430.25" width="174.10" height="16.60" rx="8.30" fill="#222" stroke="#5a5a5a" stroke-width=".9" opacity="1"/><path d="M409.60 438.55L417.60 434.55L417.60 442.55Z" fill="#ddd" opacity="1"/><path d="M574.30 438.55L566.30 434.55L566.30 442.55Z" fill="#7a7a7a" opacity="1"/><rect x="404.90" y="450.36" width="174.10" height="16.80" fill="#222" stroke="#585858" stroke-width="1" opacity="1"/><rect x="620.00" y="433.05" width="172.40" height="16.60" rx="8.30" fill="#222" stroke="#5a5a5a" stroke-width=".9" opacity="0.22"/><path d="M624.70 441.35L632.70 437.35L632.70 445.35Z" fill="#ddd" opacity="0.22"/><path d="M787.70 441.35L779.70 437.35L779.70 445.35Z" fill="#ddd" opacity="0.22"/><rect x="620.00" y="453.16" width="172.40" height="16.80" fill="#222" stroke="#585858" stroke-width="1" opacity="0.22"/><rect x="834.90" y="432.85" width="176.60" height="16.60" rx="8.30" fill="#222" stroke="#5a5a5a" stroke-width=".9" opacity="1"/><path d="M839.60 441.15L847.60 437.15L847.60 445.15Z" fill="#ddd" opacity="1"/><path d="M1006.80 441.15L998.80 437.15L998.80 445.15Z" fill="#ddd" opacity="1"/><rect x="834.90" y="452.96" width="176.60" height="16.80" fill="#222" stroke="#585858" stroke-width="1" opacity="1"/><rect x="402.00" y="733.05" width="176.60" height="16.60" rx="8.30" fill="#222" stroke="#5a5a5a" stroke-width=".9" opacity="1"/><path d="M406.70 741.35L414.70 737.35L414.70 745.35Z" fill="#ddd" opacity="1"/><path d="M573.90 741.35L565.90 737.35L565.90 745.35Z" fill="#ddd" opacity="1"/><rect x="402.00" y="753.16" width="176.60" height="16.80" fill="#222" stroke="#585858" stroke-width="1" opacity="1"/><rect x="839.60" y="735.55" width="172.50" height="16.60" rx="8.30" fill="#222" stroke="#5a5a5a" stroke-width=".9" opacity="1"/><path d="M844.30 743.85L852.30 739.85L852.30 747.85Z" fill="#ddd" opacity="1"/><path d="M1007.40 743.85L999.40 739.85L999.40 747.85Z" fill="#ddd" opacity="1"/><rect x="839.60" y="755.66" width="172.50" height="16.80" fill="#222" stroke="#585858" stroke-width="1" opacity="1"/><rect x="1108.00" y="438.29" width="237.20" height="16.60" rx="8.30" fill="#222" stroke="#5a5a5a" stroke-width=".9" opacity="1"/><rect x="1108.00" y="458.40" width="237.20" height="16.60" rx="8.30" fill="#222" stroke="#5a5a5a" stroke-width=".9" opacity="1"/><path d="M1112.70 466.70L1120.70 462.70L1120.70 470.70Z" fill="#7a7a7a" opacity="1"/><path d="M1340.50 466.70L1332.50 462.70L1332.50 470.70Z" fill="#ddd" opacity="1"/><rect x="1108.00" y="697.47" width="235.10" height="16.60" rx="8.30" fill="#222" stroke="#5a5a5a" stroke-width=".9" opacity="1"/><path d="M1112.70 705.77L1120.70 701.77L1120.70 709.77Z" fill="#ddd" opacity="1"/><path d="M1338.40 705.77L1330.40 701.77L1330.40 709.77Z" fill="#ddd" opacity="1"/><rect x="1108.00" y="717.58" width="235.10" height="16.60" rx="8.30" fill="#222" stroke="#5a5a5a" stroke-width=".9" opacity="1"/><path d="M1112.70 725.88L1120.70 721.88L1120.70 729.88Z" fill="#ddd" opacity="1"/><path d="M1338.40 725.88L1330.40 721.88L1330.40 729.88Z" fill="#ddd" opacity="1"/><rect x="1108.00" y="737.70" width="235.10" height="16.60" rx="8.30" fill="#222" stroke="#5a5a5a" stroke-width=".9" opacity="1"/><path d="M1112.70 746.00L1120.70 742.00L1120.70 750.00Z" fill="#ddd" opacity="1"/><path d="M1338.40 746.00L1330.40 742.00L1330.40 750.00Z" fill="#ddd" opacity="1"/></svg>
<svg class="links" style="z-index:20" viewBox="0 0 1779 1000"><circle cx="347.90" cy="51.94" r="4.2" fill="rgba(0,0,0,.7)" opacity="1"/><circle cx="347.90" cy="51.94" r="3.35" fill="#64B5F6" opacity="1"/><circle cx="347.90" cy="68.70" r="4.2" fill="rgba(0,0,0,.7)" opacity="1"/><circle cx="347.90" cy="68.70" r="3.35" fill="#81C784" opacity="1"/><circle cx="568.60" cy="101.74" r="4.2" fill="rgba(0,0,0,.7)" opacity="1"/><circle cx="568.60" cy="101.74" r="3.35" fill="#6fe868" opacity="1"/><circle cx="599.90" cy="99.04" r="4.2" fill="rgba(0,0,0,.7)" opacity="1"/><circle cx="599.90" cy="99.04" r="3.35" fill="#6fe868" opacity="1"/><circle cx="599.90" cy="115.80" r="4.2" fill="rgba(0,0,0,.7)" opacity="1"/><circle cx="599.90" cy="115.80" r="3.35" fill="#64B5F6" opacity="1"/><circle cx="771.50" cy="99.04" r="4.2" fill="rgba(0,0,0,.7)" opacity="1"/><circle cx="771.50" cy="99.04" r="3.35" fill="#64B5F6" opacity="1"/><circle cx="771.50" cy="115.80" r="4.2" fill="rgba(0,0,0,.7)" opacity="1"/><circle cx="771.50" cy="115.80" r="3.35" fill="#64B5F6" opacity="1"/><circle cx="771.50" cy="132.56" r="4.2" fill="rgba(0,0,0,.7)" opacity="1"/><circle cx="771.50" cy="132.56" r="3.35" fill="#64B5F6" opacity="1"/><circle cx="771.50" cy="149.32" r="4.2" fill="rgba(0,0,0,.7)" opacity="1"/><circle cx="771.50" cy="149.32" r="3.35" fill="#64B5F6" opacity="1"/><circle cx="802.50" cy="97.14" r="4.2" fill="rgba(0,0,0,.7)" opacity="1"/><circle cx="802.50" cy="97.14" r="3.35" fill="#64B5F6" opacity="1"/><circle cx="802.50" cy="113.90" r="4.2" fill="rgba(0,0,0,.7)" opacity="1"/><circle cx="802.50" cy="113.90" r="3.35" fill="#64B5F6" opacity="1"/><circle cx="802.50" cy="130.66" r="4.2" fill="rgba(0,0,0,.7)" opacity="1"/><circle cx="802.50" cy="130.66" r="3.35" fill="#64B5F6" opacity="1"/><circle cx="979.50" cy="97.14" r="4.2" fill="rgba(0,0,0,.7)" opacity="1"/><circle cx="979.50" cy="97.14" r="3.35" fill="#81C784" opacity="1"/><circle cx="1015.20" cy="97.24" r="4.2" fill="rgba(0,0,0,.7)" opacity="1"/><circle cx="1015.20" cy="97.24" r="3.35" fill="#81C784" opacity="1"/><circle cx="1015.20" cy="114.00" r="4.3" fill="rgba(0,0,0,.7)" opacity="1"/><circle cx="1015.20" cy="114.00" r="2.7" fill="none" stroke="#81C784" stroke-width="2" opacity="1"/><circle cx="1172.70" cy="97.24" r="4.2" fill="rgba(0,0,0,.7)" opacity="1"/><circle cx="1172.70" cy="97.24" r="3.35" fill="#81C784" opacity="1"/><circle cx="1018.40" cy="214.04" r="4.2" fill="rgba(0,0,0,.7)" opacity="1"/><circle cx="1018.40" cy="214.04" r="3.35" fill="#81C784" opacity="1"/><circle cx="1170.20" cy="214.04" r="4.2" fill="rgba(0,0,0,.7)" opacity="1"/><circle cx="1170.20" cy="214.04" r="3.35" fill="#64B5F6" opacity="1"/><circle cx="494.30" cy="221.74" r="4.2" fill="rgba(0,0,0,.7)" opacity="1"/><circle cx="494.30" cy="221.74" r="3.35" fill="#81C784" opacity="1"/><circle cx="664.10" cy="221.74" r="4.2" fill="rgba(0,0,0,.7)" opacity="1"/><circle cx="664.10" cy="221.74" r="3.35" fill="#81C784" opacity="1"/><circle cx="1205.10" cy="91.84" r="4.2" fill="rgba(0,0,0,.7)" opacity="1"/><circle cx="1205.10" cy="91.84" r="3.35" fill="#64B5F6" opacity="1"/><circle cx="1411.10" cy="51.04" r="4.2" fill="rgba(0,0,0,.7)" opacity="1"/><circle cx="1411.10" cy="51.04" r="3.35" fill="#64B5F6" opacity="1"/><circle cx="584.10" cy="403.04" r="4.2" fill="rgba(0,0,0,.7)" opacity="1"/><circle cx="584.10" cy="403.04" r="3.35" fill="#64B5F6" opacity="1"/><circle cx="584.10" cy="419.80" r="4.2" fill="rgba(0,0,0,.7)" opacity="1"/><circle cx="584.10" cy="419.80" r="3.35" fill="#81C784" opacity="1"/><circle cx="797.50" cy="405.84" r="4.2" fill="rgba(0,0,0,.7)" opacity="0.25"/><circle cx="797.50" cy="405.84" r="3.35" fill="#64B5F6" opacity="0.25"/><circle cx="797.50" cy="422.60" r="4.2" fill="rgba(0,0,0,.7)" opacity="0.25"/><circle cx="797.50" cy="422.60" r="3.35" fill="#81C784" opacity="0.25"/><circle cx="1016.60" cy="406.24" r="4.2" fill="rgba(0,0,0,.7)" opacity="1"/><circle cx="1016.60" cy="406.24" r="3.35" fill="#64B5F6" opacity="1"/><circle cx="1016.60" cy="423.00" r="4.2" fill="rgba(0,0,0,.7)" opacity="1"/><circle cx="1016.60" cy="423.00" r="3.35" fill="#81C784" opacity="1"/><circle cx="583.70" cy="705.84" r="4.2" fill="rgba(0,0,0,.7)" opacity="1"/><circle cx="583.70" cy="705.84" r="3.35" fill="#64B5F6" opacity="1"/><circle cx="583.70" cy="722.60" r="4.2" fill="rgba(0,0,0,.7)" opacity="1"/><circle cx="583.70" cy="722.60" r="3.35" fill="#81C784" opacity="1"/><circle cx="1017.20" cy="708.14" r="4.2" fill="rgba(0,0,0,.7)" opacity="1"/><circle cx="1017.20" cy="708.14" r="3.35" fill="#64B5F6" opacity="1"/><circle cx="1017.20" cy="724.90" r="4.2" fill="rgba(0,0,0,.7)" opacity="1"/><circle cx="1017.20" cy="724.90" r="3.35" fill="#81C784" opacity="1"/><circle cx="1350.30" cy="428.14" r="4.2" fill="rgba(0,0,0,.7)" opacity="1"/><circle cx="1350.30" cy="428.14" r="3.35" fill="#C5A3E8" opacity="1"/><circle cx="1104.20" cy="552.94" r="4.2" fill="rgba(0,0,0,.7)" opacity="1"/><circle cx="1104.20" cy="552.94" r="3.35" fill="#C5A3E8" opacity="1"/><circle cx="1104.20" cy="569.70" r="4.2" fill="rgba(0,0,0,.7)" opacity="1"/><circle cx="1104.20" cy="569.70" r="3.35" fill="#64B5F6" opacity="1"/><circle cx="1104.20" cy="586.46" r="4.2" fill="rgba(0,0,0,.7)" opacity="1"/><circle cx="1104.20" cy="586.46" r="3.35" fill="#64B5F6" opacity="1"/><circle cx="1104.20" cy="603.22" r="4.2" fill="rgba(0,0,0,.7)" opacity="1"/><circle cx="1104.20" cy="603.22" r="3.35" fill="#81C784" opacity="1"/><circle cx="1104.20" cy="619.98" r="4.3" fill="rgba(0,0,0,.7)" opacity="1"/><circle cx="1104.20" cy="619.98" r="2.7" fill="none" stroke="#64B5F6" stroke-width="2" opacity="1"/><circle cx="1104.20" cy="636.74" r="4.3" fill="rgba(0,0,0,.7)" opacity="1"/><circle cx="1104.20" cy="636.74" r="2.7" fill="none" stroke="#64B5F6" stroke-width="2" opacity="1"/><circle cx="1104.20" cy="653.50" r="4.3" fill="rgba(0,0,0,.7)" opacity="1"/><circle cx="1104.20" cy="653.50" r="2.7" fill="none" stroke="#64B5F6" stroke-width="2" opacity="1"/><circle cx="1104.20" cy="670.26" r="4.3" fill="rgba(0,0,0,.7)" opacity="1"/><circle cx="1104.20" cy="670.26" r="2.7" fill="none" stroke="#64B5F6" stroke-width="2" opacity="1"/><circle cx="1104.20" cy="687.02" r="4.3" fill="rgba(0,0,0,.7)" opacity="1"/><circle cx="1104.20" cy="687.02" r="2.7" fill="none" stroke="#64B5F6" stroke-width="2" opacity="1"/><circle cx="1347.80" cy="552.94" r="4.2" fill="rgba(0,0,0,.7)" opacity="1"/><circle cx="1347.80" cy="552.94" r="3.35" fill="#64B5F6" opacity="1"/><circle cx="31.75" cy="28.10" r="4.2" fill="#6b6b6b" opacity="1"/><circle cx="397.15" cy="78.00" r="4.2" fill="#6b6b6b" opacity="1"/><circle cx="604.45" cy="75.30" r="4.2" fill="#6b6b6b" opacity="1"/><circle cx="807.05" cy="72.60" r="4.2" fill="#6b6b6b" opacity="1"/><circle cx="1019.75" cy="73.50" r="4.2" fill="#6b6b6b" opacity="1"/><circle cx="1022.95" cy="189.60" r="4.2" fill="#6b6b6b" opacity="1"/><circle cx="498.85" cy="198.00" r="4.2" fill="#6b6b6b" opacity="1"/><circle cx="1209.65" cy="68.10" r="4.2" fill="#6b6b6b" opacity="1"/><circle cx="1415.65" cy="27.30" r="4.2" fill="#6b6b6b" opacity="1"/><circle cx="405.65" cy="379.30" r="4.2" fill="#6b6b6b" opacity="1"/><circle cx="835.65" cy="381.70" r="4.2" fill="#6b6b6b" opacity="1"/><circle cx="402.75" cy="682.10" r="4.2" fill="#6b6b6b" opacity="1"/><circle cx="840.35" cy="683.50" r="4.2" fill="#6b6b6b" opacity="1"/><circle cx="1108.75" cy="404.00" r="4.2" fill="#6b6b6b" opacity="1"/><circle cx="1108.75" cy="529.20" r="4.2" fill="#6b6b6b" opacity="1"/><circle cx="620.75" cy="382.10" r="4.2" fill="#6b6b6b" opacity="0.25"/></svg>
<div class="frame"></div>
</body></html>
